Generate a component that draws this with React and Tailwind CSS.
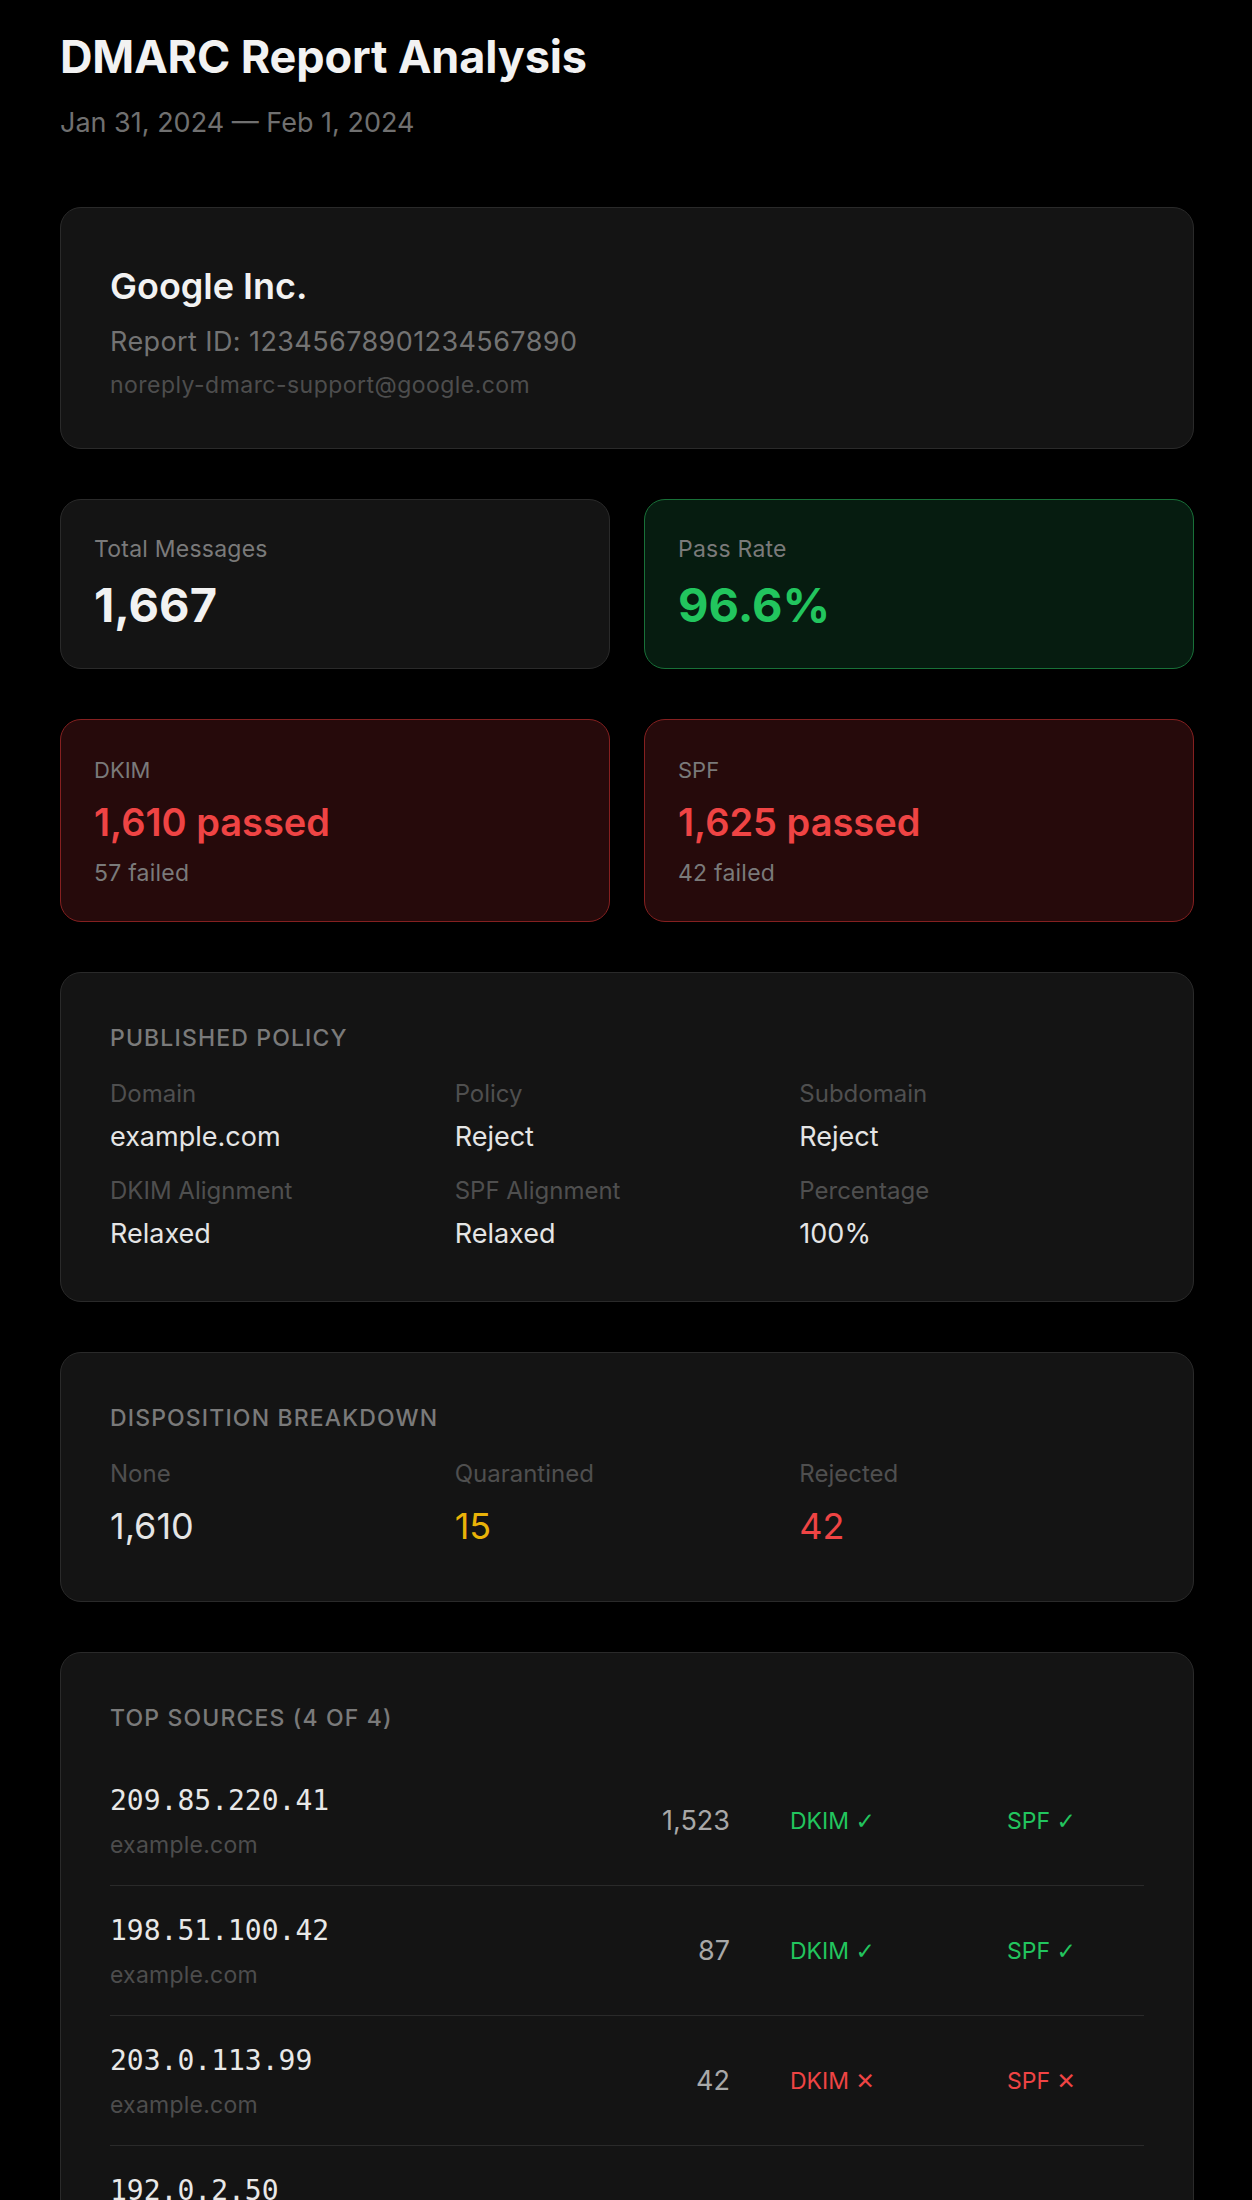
const sources = [
  { ip: '209.85.220.41', domain: 'example.com', count: '1,523', dkim: true, spf: true },
  { ip: '198.51.100.42', domain: 'example.com', count: '87', dkim: true, spf: true },
  { ip: '203.0.113.99', domain: 'example.com', count: '42', dkim: false, spf: false },
  { ip: '192.0.2.50', domain: 'example.com', count: '15', dkim: false, spf: true },
];

function Pill({ ok, label }) {
  return (
    <span className={ok ? 'text-[#22c55e]' : 'text-[#ef4444]'}>
      {label} <span className="font-['DejaVu_Sans',sans-serif]">{ok ? '✓' : '✕'}</span>
    </span>
  );
}

function Card({ children, className = '' }) {
  return (
    <div className={`rounded-[21px] border border-[#2a2a2a] bg-[#141414] ${className}`}>{children}</div>
  );
}

function Field({ label, value, valueClass = 'text-[#e5e5e5]' }) {
  return (
    <div>
      <div className="text-[24px] leading-[32px] text-[#4f4f4f]">{label}</div>
      <div className={`mt-[9px] text-[27px] leading-[36px] ${valueClass}`}>{value}</div>
    </div>
  );
}

export default function App() {
  return (
    <div className="min-h-screen bg-black font-['Inter',sans-serif] text-[#e5e5e5]">
      <div className="pl-[60px] pr-[58px] pt-[30px] pb-[60px]">
        <h1 className="text-[45px] font-bold leading-[54px] tracking-[-0.003em] text-[#f2f2f2]">DMARC Report Analysis</h1>
        <div className="mt-[21px] text-[27px] leading-[36px] text-[#707070]">Jan 31, 2024 — Feb 1, 2024</div>

        <div className="mt-[66px] flex flex-col gap-[50px]">
          <Card className="px-[49px] py-[49px]">
            <div className="text-[36px] font-semibold leading-[58px] text-[#f2f2f2]">Google Inc.</div>
            <div className="mt-[7px] text-[27px] leading-[40px] tracking-[0.015em] text-[#737373]">Report ID: 12345678901234567890</div>
            <div className="mt-[9px] text-[23px] leading-[28px] tracking-[0.02em] text-[#4d4d4d]">noreply-dmarc-support@google.com</div>
          </Card>

          <div className="grid grid-cols-2 gap-[34px]">
            <div className="rounded-[21px] border border-[#2a2a2a] bg-[#141414] px-[33px] py-[33px]">
              <div className="text-[23px] leading-[33px] tracking-[0.01em] text-[#7a7a7a]">Total Messages</div>
              <div className="mt-[9px] text-[47px] font-bold leading-[60px] text-[#f2f2f2]">1,667</div>
            </div>
            <div className="rounded-[21px] border border-[#187038] bg-[#061c10] px-[33px] py-[33px]">
              <div className="text-[23px] leading-[33px] tracking-[0.01em] text-[#7a7a7a]">Pass Rate</div>
              <div className="mt-[9px] text-[47px] font-bold leading-[60px] text-[#22c55e]">96.6%</div>
            </div>
          </div>

          <div className="grid grid-cols-2 gap-[34px]">
            <div className="rounded-[21px] border border-[#852020] bg-[#260a0b] px-[33px] py-[33px]">
              <div className="text-[22px] leading-[35px] text-[#7a7a7a]">DKIM</div>
              <div className="mt-[12px] text-[38px] font-semibold leading-[44px] text-[#ef4444]">1,610 passed</div>
              <div className="mt-[15px] text-[23px] leading-[29px] tracking-[0.01em] text-[#7a7a7a]">57 failed</div>
            </div>
            <div className="rounded-[21px] border border-[#852020] bg-[#260a0b] px-[33px] py-[33px]">
              <div className="text-[22px] leading-[35px] text-[#7a7a7a]">SPF</div>
              <div className="mt-[12px] text-[38px] font-semibold leading-[44px] text-[#ef4444]">1,625 passed</div>
              <div className="mt-[15px] text-[23px] leading-[29px] tracking-[0.01em] text-[#7a7a7a]">42 failed</div>
            </div>
          </div>

          <Card className="px-[49px] py-[49px]">
            <div className="text-[23px] font-medium uppercase leading-[32px] tracking-[0.05em] text-[#7a7a7a]">Published Policy</div>
            <div className="mt-[24px] grid grid-cols-3 gap-y-[20px]">
              <Field label="Domain" value="example.com" />
              <Field label="Policy" value="Reject" />
              <Field label="Subdomain" value="Reject" />
              <Field label="DKIM Alignment" value="Relaxed" />
              <Field label="SPF Alignment" value="Relaxed" />
              <Field label="Percentage" value="100%" />
            </div>
          </Card>

          <Card className="px-[49px] py-[49px]">
            <div className="text-[23px] font-medium uppercase leading-[32px] tracking-[0.05em] text-[#7a7a7a]">Disposition Breakdown</div>
            <div className="mt-[24px] grid grid-cols-3">
              {[
                ['None', '1,610', 'text-[#e5e5e5]'],
                ['Quarantined', '15', 'text-[#eab308]'],
                ['Rejected', '42', 'text-[#ef4444]'],
              ].map(([l, v, c]) => (
                <div key={l}>
                  <div className="text-[24px] leading-[32px] text-[#4f4f4f]">{l}</div>
                  <div className={`mt-[11px] text-[36px] leading-[51px] ${c}`}>{v}</div>
                </div>
              ))}
            </div>
          </Card>

          <Card className="px-[49px] pt-[49px] pb-[30px]">
            <div className="text-[23px] font-medium uppercase leading-[32px] tracking-[0.05em] text-[#7a7a7a]">Top Sources (4 of 4)</div>
            <div className="mt-[22px] flex flex-col">
              {sources.map((s, i) => (
                <div
                  key={s.ip}
                  className={`flex items-center pt-[25px] ${i < sources.length - 1 ? 'border-b border-[#2a2a2a] pb-[24px]' : 'pb-[25px]'}`}
                >
                  <div className="flex-1">
                    <div className="font-['DejaVu_Sans_Mono',monospace] text-[28px] leading-[40px] text-[#e8e8e8]">{s.ip}</div>
                    <div className="mt-[8px] text-[23px] leading-[32px] tracking-[0.01em] text-[#4d4d4d]">{s.domain}</div>
                  </div>
                  <div className="shrink-0 text-right text-[27px] leading-[36px] text-[#a8a8a8]">{s.count}</div>
                  <div className="ml-[60px] w-[217px] shrink-0 text-[23px] leading-[32px]">
                    <Pill ok={s.dkim} label="DKIM" />
                  </div>
                  <div className="w-[137px] shrink-0 text-[23px] leading-[32px]">
                    <Pill ok={s.spf} label="SPF" />
                  </div>
                </div>
              ))}
            </div>
          </Card>
        </div>
      </div>
    </div>
  );
}
